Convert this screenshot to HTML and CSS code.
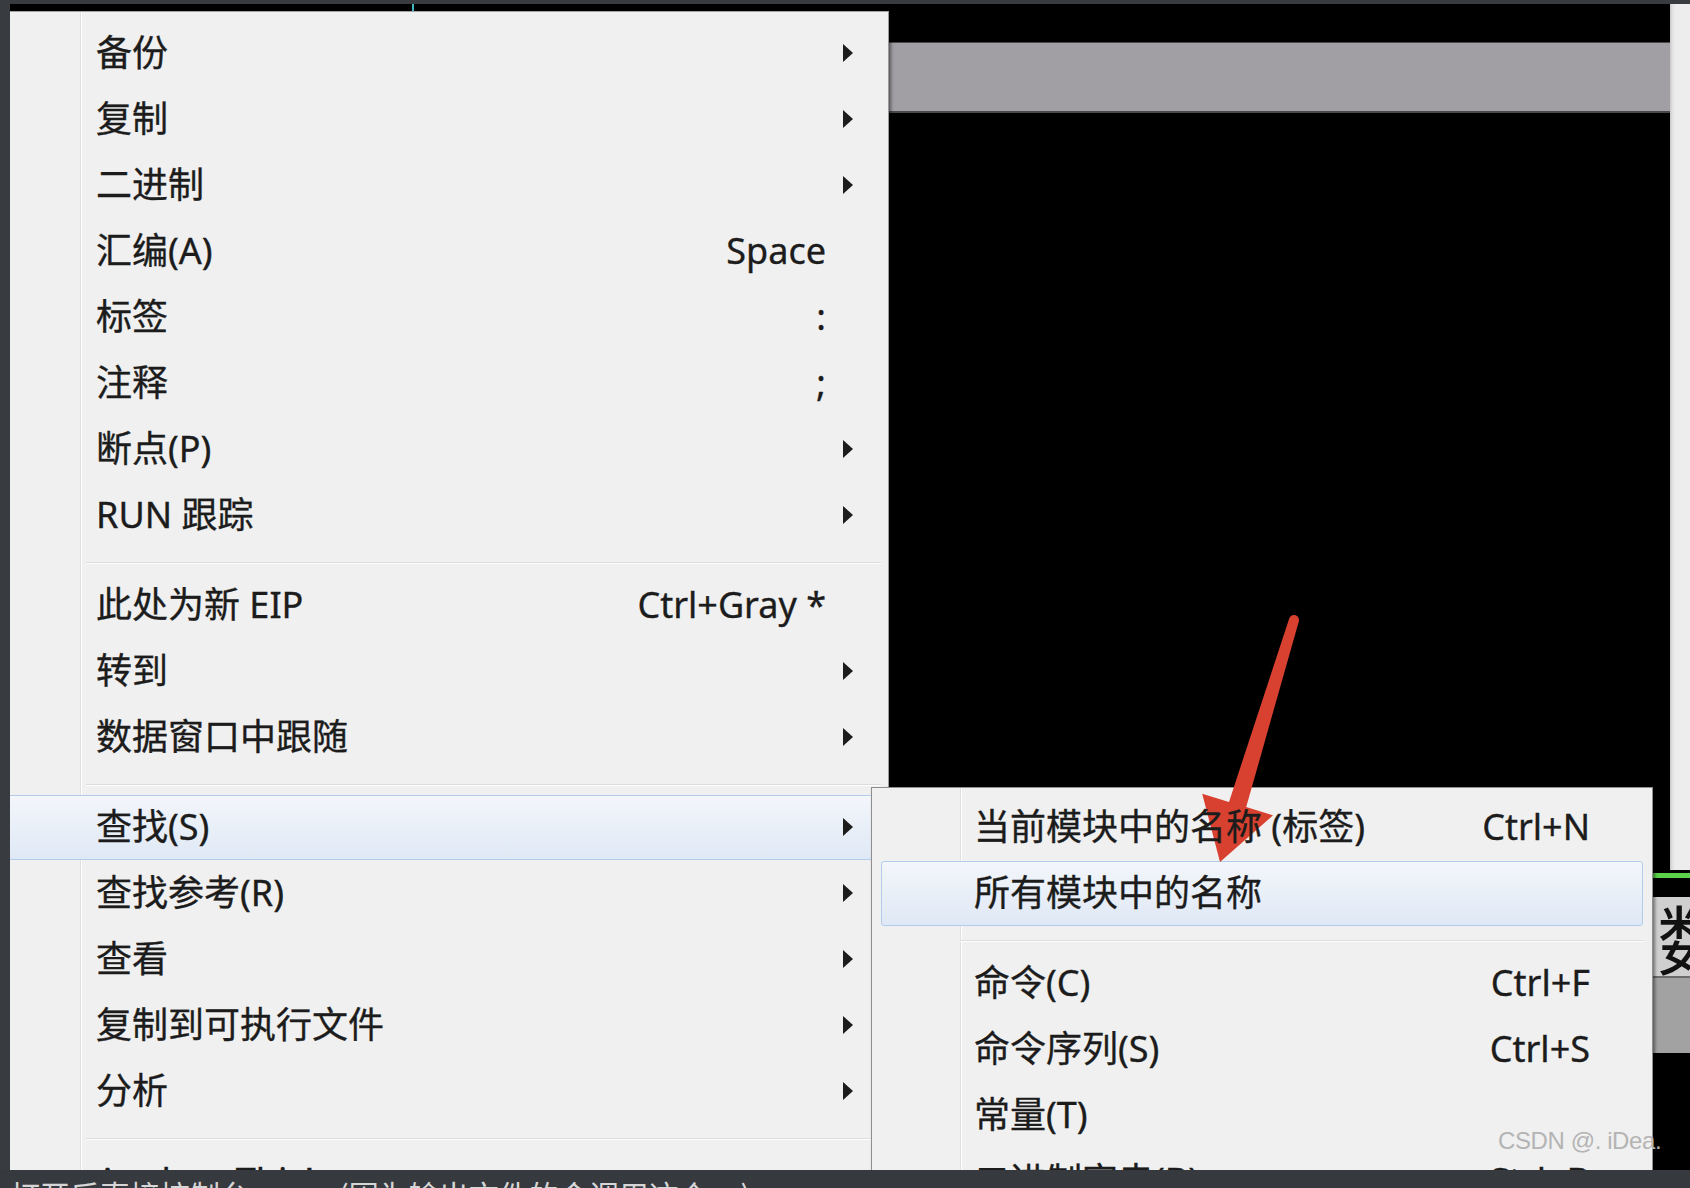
FILE: index.html
```html
<!DOCTYPE html>
<html lang="zh-CN">
<head>
<meta charset="utf-8">
<title>OllyDbg 右键菜单</title>
<link rel="stylesheet" href="styles.css">
</head>
<body>
<div class="screen">
  <div class="app">
    <div class="top-area">
      <div class="pane-main">
        <div class="tickrow"><span class="tick"></span></div>
        <div class="band"></div>
      </div>
      <div class="pane-side"></div>
    </div>
    <div class="gap-a"></div>
    <div class="green-line"></div>
    <div class="gap-b"></div>
    <div class="dump-head"><span class="dump-title">数据</span></div>
    <div class="dump-gray"></div>
    <div class="dump-body"></div>

    <div class="menu main-menu">
      <div class="item sub"><span class="label">备份</span><span class="key"></span><span class="arrow"></span></div>
      <div class="item sub"><span class="label">复制</span><span class="key"></span><span class="arrow"></span></div>
      <div class="item sub"><span class="label">二进制</span><span class="key"></span><span class="arrow"></span></div>
      <div class="item"><span class="label">汇编(A)</span><span class="key">Space</span><span class="arrow"></span></div>
      <div class="item"><span class="label">标签</span><span class="key">:</span><span class="arrow"></span></div>
      <div class="item"><span class="label">注释</span><span class="key">;</span><span class="arrow"></span></div>
      <div class="item sub"><span class="label">断点(P)</span><span class="key"></span><span class="arrow"></span></div>
      <div class="item sub"><span class="label">RUN 跟踪</span><span class="key"></span><span class="arrow"></span></div>
      <div class="sep"></div>
      <div class="item"><span class="label">此处为新 EIP</span><span class="key">Ctrl+Gray *</span><span class="arrow"></span></div>
      <div class="item sub"><span class="label">转到</span><span class="key"></span><span class="arrow"></span></div>
      <div class="item sub"><span class="label">数据窗口中跟随</span><span class="key"></span><span class="arrow"></span></div>
      <div class="sep"></div>
      <div class="item sub hl"><span class="label">查找(S)</span><span class="key"></span><span class="arrow"></span></div>
      <div class="item sub"><span class="label">查找参考(R)</span><span class="key"></span><span class="arrow"></span></div>
      <div class="item sub"><span class="label">查看</span><span class="key"></span><span class="arrow"></span></div>
      <div class="item sub"><span class="label">复制到可执行文件</span><span class="key"></span><span class="arrow"></span></div>
      <div class="item sub"><span class="label">分析</span><span class="key"></span><span class="arrow"></span></div>
      <div class="sep"></div>
      <div class="item sub"><span class="label">Analyze This!</span><span class="key"></span><span class="arrow"></span></div>
    </div>

    <div class="menu sub-menu">
      <div class="item"><span class="label">当前模块中的名称 (标签)</span><span class="key">Ctrl+N</span><span class="arrow"></span></div>
      <div class="item hl"><span class="label">所有模块中的名称</span><span class="key"></span><span class="arrow"></span></div>
      <div class="sep"></div>
      <div class="item"><span class="label">命令(C)</span><span class="key">Ctrl+F</span><span class="arrow"></span></div>
      <div class="item"><span class="label">命令序列(S)</span><span class="key">Ctrl+S</span><span class="arrow"></span></div>
      <div class="item"><span class="label">常量(T)</span><span class="key"></span><span class="arrow"></span></div>
      <div class="item"><span class="label">二进制字串(B)</span><span class="key">Ctrl+B</span><span class="arrow"></span></div>
    </div>
  </div>
  <div class="statusbar">打开后直接控制台 ......... (因为输出文件的会调用这个 ...)</div>

  <svg class="annot" viewBox="0 0 1690 1188" width="1690" height="1188" aria-hidden="true">
    <polygon points="1298.8,621.5 1246.2,807.1 1273,815.3 1220,862 1202.2,793.7 1229,801.9 1289.2,618.5" fill="#d8412f"/>
    <circle cx="1294" cy="620" r="5" fill="#d8412f"/>
  </svg>
  <div class="watermark">CSDN @. iDea.</div>
</div>
</body>
</html>
```

FILE: styles.css
```css
html, body {
  margin: 0;
  padding: 0;
  background: #373a3f;
}

.screen {
  position: relative;
  width: 1690px;
  height: 1188px;
  overflow: hidden;
  background: #383b40;
  padding: 4px 0 0 10px;
  box-sizing: border-box;
}

.app {
  position: relative;
  width: 1680px;
  height: 1166px;
  overflow: hidden;
  background: #000;
  display: flex;
  flex-direction: column;
}

.top-area {
  height: 866px;
  display: flex;
  flex: 0 0 auto;
}

.pane-main {
  flex: 0 0 1660px;
  background: #000;
}

.tickrow {
  height: 7px;
}

.tick {
  display: block;
  margin-left: 402px;
  width: 2px;
  height: 7px;
  background: #3fb8c0;
}

.band {
  margin-top: 31px;
  height: 71px;
  box-sizing: border-box;
  background: #a19fa4;
  border-top: 1px solid #4a4a4c;
  border-bottom: 2px solid #4a4a4c;
}

.pane-side {
  flex: 1 1 auto;
  background: linear-gradient(90deg, #c9c9c9 0, #e6e6e6 3px, #ededed 6px);
}

.gap-a { height: 3px; flex: 0 0 auto; }
.green-line { height: 5px; flex: 0 0 auto; background: #5bd24a; }
.gap-b { height: 19px; flex: 0 0 auto; }

.dump-head {
  flex: 0 0 81px;
  box-sizing: border-box;
  background: #cfcfcf;
  border-bottom: 2px solid #6c6c6c;
  overflow: hidden;
  white-space: nowrap;
  padding-left: 1647px;
}

.dump-title {
  display: block;
  font-family: "Noto Sans CJK SC", sans-serif;
  font-size: 76px;
  line-height: 80px;
  color: #111;
}

.dump-gray {
  flex: 0 0 75px;
  background: #a2a2a2;
}

.dump-body {
  flex: 1 1 auto;
  background: #000;
}

/* ---------- menus ---------- */

.menu {
  position: absolute;
  box-sizing: border-box;
  font-family: "Noto Sans", "Noto Sans CJK SC", sans-serif;
  font-size: 36px;
  line-height: 66px;
  color: #1c1c1c;
  -webkit-text-stroke: 0.35px #1c1c1c;
  display: flex;
  flex-direction: column;
  white-space: nowrap;
}

.main-menu {
  left: 0;
  top: 7px;
  width: 879px;
  height: 1200px;
  padding-top: 8px;
  border-top: 1px solid #a3a3a3;
  border-right: 1px solid #9a9a9a;
  background:
    linear-gradient(90deg, transparent 70px, #dedfdf 70px, #dedfdf 71px, #ffffff 71px, #ffffff 72px, transparent 72px),
    #f0f0f0;
  box-shadow: 2px 2px 3px rgba(0, 0, 0, 0.45);
}

.sub-menu {
  left: 861px;
  top: 783px;
  width: 782px;
  height: 420px;
  padding-top: 6px;
  border: 1px solid #8f8f8f;
  background:
    linear-gradient(90deg, transparent 88px, #dedfdf 88px, #dedfdf 89px, #ffffff 89px, #ffffff 90px, transparent 90px),
    #f0f0f0;
  box-shadow: 2px 2px 3px rgba(0, 0, 0, 0.45);
}

.item {
  position: relative;
  height: 66px;
  flex: 0 0 66px;
  display: grid;
  grid-template-columns: 1fr auto 62px;
  align-items: center;
}

.main-menu .item { padding-left: 86px; }
.sub-menu .item { padding-left: 102px; }

.item > span {
  position: relative;
  z-index: 1;
}

.key {
  text-align: right;
}

.arrow {
  height: 66px;
  display: flex;
  align-items: center;
  padding-left: 17px;
}

.item.sub .arrow::before {
  content: "";
  display: block;
  width: 0;
  height: 0;
  border-left: 10px solid #1c1c1c;
  border-top: 9px solid transparent;
  border-bottom: 9px solid transparent;
}

.item.hl::before {
  content: "";
  position: absolute;
  z-index: 0;
  border: 1px solid #b2cdec;
  border-radius: 3px;
  background: linear-gradient(180deg, #f3f6fb 0%, #eaf0f8 45%, #dfe8f5 100%);
}

.main-menu .item.hl::before {
  top: 1px;
  bottom: 0;
  left: -6px;
  right: -10px;
}

.sub-menu .item.hl::before {
  top: 1px;
  bottom: 0;
  left: 9px;
  right: 9px;
}

.sep {
  flex: 0 0 24px;
  height: 24px;
  position: relative;
}

.sep::after {
  content: "";
  position: absolute;
  top: 14px;
  height: 1px;
  background: #dcdcdc;
  border-bottom: 1px solid #ffffff;
}

.main-menu .sep::after { left: 76px; right: 7px; }
.sub-menu .sep::after { left: 88px; right: 9px; }

/* ---------- status bar ---------- */

.statusbar {
  height: 18px;
  margin-left: -10px;
  padding: 9px 0 0 10px;
  box-sizing: border-box;
  overflow: hidden;
  white-space: nowrap;
  background: #36393e;
  color: #d6d6d6;
  font-family: "Noto Sans CJK SC", sans-serif;
  font-size: 30px;
  line-height: 30px;
}

/* ---------- overlays ---------- */

.annot {
  position: absolute;
  left: 0;
  top: 0;
  pointer-events: none;
}

.watermark {
  position: absolute;
  left: 1498px;
  top: 1129px;
  font-family: "Liberation Sans", Arial, sans-serif;
  font-size: 24px;
  line-height: 24px;
  letter-spacing: -0.4px;
  color: #b4b4b4;
  white-space: nowrap;
}
```
